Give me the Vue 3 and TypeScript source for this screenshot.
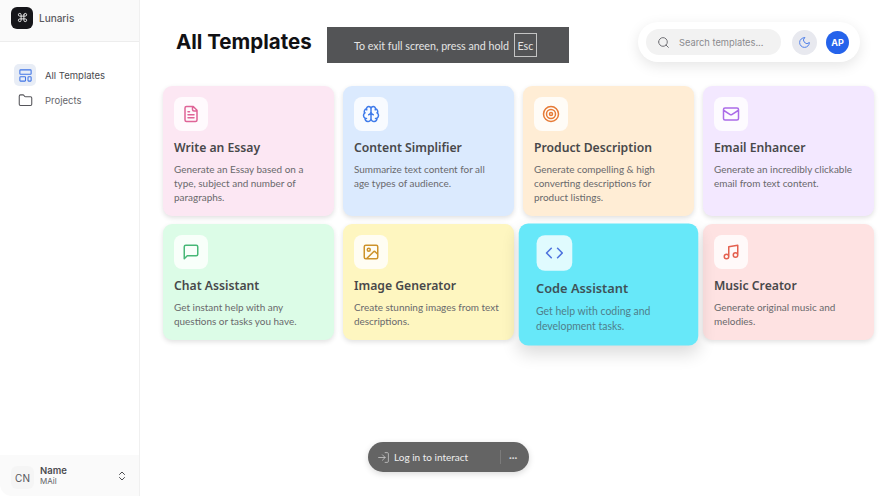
<script setup lang="ts">
const icons: Record<string, string> = {
  command: 'M15 6v12a3 3 0 1 0 3-3H6a3 3 0 1 0 3 3V6a3 3 0 1 0-3 3h12a3 3 0 1 0-3-3',
  layout: 'M4 3h16a1 1 0 0 1 1 1v5a1 1 0 0 1-1 1H4a1 1 0 0 1-1-1V4a1 1 0 0 1 1-1Z M4 14h7a1 1 0 0 1 1 1v5a1 1 0 0 1-1 1H4a1 1 0 0 1-1-1v-5a1 1 0 0 1 1-1Z M17 14h3a1 1 0 0 1 1 1v5a1 1 0 0 1-1 1h-3a1 1 0 0 1-1-1v-5a1 1 0 0 1 1-1Z',
  folder: 'M20 20a2 2 0 0 0 2-2V8a2 2 0 0 0-2-2h-7.9a2 2 0 0 1-1.69-.9L9.6 3.9A2 2 0 0 0 7.93 3H4a2 2 0 0 0-2 2v13a2 2 0 0 0 2 2Z',
  chevrons: 'm7 15 5 5 5-5 M7 9l5-5 5 5',
  search: 'M3 11a8 8 0 1 0 16 0a8 8 0 1 0-16 0 M21 21l-4.3-4.3',
  moon: 'M12 3a6 6 0 0 0 9 9 9 9 0 1 1-9-9Z',
  login: 'M15 3h4a2 2 0 0 1 2 2v14a2 2 0 0 1-2 2h-4 M10 17l5-5-5-5 M15 12H3',
  file: 'M15 2H6a2 2 0 0 0-2 2v16a2 2 0 0 0 2 2h12a2 2 0 0 0 2-2V7Z M14 2v4a2 2 0 0 0 2 2h4 M10 9H8 M16 13H8 M16 17H8',
  brain: 'M12 5a3 3 0 1 0-5.997.125 4 4 0 0 0-2.526 5.77 4 4 0 0 0 .556 6.588A4 4 0 1 0 12 18Z M12 5a3 3 0 1 1 5.997.125 4 4 0 0 1 2.526 5.77 4 4 0 0 1-.556 6.588A4 4 0 1 1 12 18Z M15 13a4.5 4.5 0 0 1-3-4 4.5 4.5 0 0 1-3 4 M17.599 6.5a3 3 0 0 0 .399-1.375 M6.003 5.125A3 3 0 0 0 6.401 6.5 M3.477 10.896a4 4 0 0 1 .585-.396 M19.938 10.5a4 4 0 0 1 .585.396 M6 18a4 4 0 0 1-1.967-.516 M19.967 17.484A4 4 0 0 1 18 18',
  target: 'M2 12a10 10 0 1 0 20 0a10 10 0 1 0-20 0 M6 12a6 6 0 1 0 12 0a6 6 0 1 0-12 0 M10 12a2 2 0 1 0 4 0a2 2 0 1 0-4 0',
  mail: 'M4 4h16a2 2 0 0 1 2 2v12a2 2 0 0 1-2 2H4a2 2 0 0 1-2-2V6a2 2 0 0 1 2-2Z M22 7l-8.97 5.7a1.94 1.94 0 0 1-2.06 0L2 7',
  chat: 'M21 15a2 2 0 0 1-2 2H7l-4 4V5a2 2 0 0 1 2-2h14a2 2 0 0 1 2 2z',
  image: 'M5 3h14a2 2 0 0 1 2 2v14a2 2 0 0 1-2 2H5a2 2 0 0 1-2-2V5a2 2 0 0 1 2-2Z M7 9a2 2 0 1 0 4 0a2 2 0 1 0-4 0 M21 15l-3.086-3.086a2 2 0 0 0-2.828 0L6 21',
  code: 'M16 18l6-6-6-6 M8 6l-6 6 6 6',
  music: 'M9 18V5l12-2v13 M3 18a3 3 0 1 0 6 0a3 3 0 1 0-6 0 M15 16a3 3 0 1 0 6 0a3 3 0 1 0-6 0',
}

interface Template {
  title: string
  desc: string
  icon: string
  tone: string
}

const templates: Template[] = [
  { title: 'Write an Essay', desc: 'Generate an Essay based on a type, subject and number of paragraphs.', icon: 'file', tone: 'pink' },
  { title: 'Content Simplifier', desc: 'Summarize text content for all age types of audience.', icon: 'brain', tone: 'blue' },
  { title: 'Product Description', desc: 'Generate compelling & high converting descriptions for product listings.', icon: 'target', tone: 'orange' },
  { title: 'Email Enhancer', desc: 'Generate an incredibly clickable email from text content.', icon: 'mail', tone: 'purple' },
  { title: 'Chat Assistant', desc: 'Get instant help with any questions or tasks you have.', icon: 'chat', tone: 'green' },
  { title: 'Image Generator', desc: 'Create stunning images from text descriptions.', icon: 'image', tone: 'yellow' },
  { title: 'Code Assistant', desc: 'Get help with coding and development tasks.', icon: 'code', tone: 'cyan' },
  { title: 'Music Creator', desc: 'Generate original music and melodies.', icon: 'music', tone: 'red' },
]
</script>

<template>
  <div class="app">
    <aside class="sidebar">
      <div class="brand">
        <span class="logo">
          <svg viewBox="0 0 24 24" class="stroke logo-icon"><path :d="icons.command" /></svg>
        </span>
        <span class="brand-name">Lunaris</span>
      </div>
      <nav class="nav">
        <a class="nav-item">
          <span class="nav-icon active">
            <svg viewBox="0 0 24 24" class="stroke nav-svg blue-stroke"><path :d="icons.layout" /></svg>
          </span>
          <span>All Templates</span>
        </a>
        <a class="nav-item">
          <span class="nav-icon">
            <svg viewBox="0 0 24 24" class="stroke nav-svg"><path :d="icons.folder" /></svg>
          </span>
          <span>Projects</span>
        </a>
      </nav>
      <div class="user">
        <span class="avatar">CN</span>
        <span class="user-text">
          <strong>Name</strong>
          <small>MAil</small>
        </span>
        <svg viewBox="0 0 24 24" class="stroke chevrons"><path :d="icons.chevrons" /></svg>
      </div>
    </aside>

    <main class="main">
      <header class="header">
        <h1>All Templates</h1>
        <div class="tools">
          <div class="search">
            <svg viewBox="0 0 24 24" class="stroke search-icon"><path :d="icons.search" /></svg>
            <span>Search templates...</span>
          </div>
          <button class="theme">
            <svg viewBox="0 0 24 24" class="stroke moon"><path :d="icons.moon" /></svg>
          </button>
          <span class="profile">AP</span>
        </div>
      </header>

      <section class="grid">
        <article v-for="t in templates" :key="t.title" class="card" :class="t.tone">
          <span class="card-icon">
            <svg viewBox="0 0 24 24" class="stroke"><path :d="icons[t.icon]" /></svg>
          </span>
          <h2>{{ t.title }}</h2>
          <p>{{ t.desc }}</p>
        </article>
      </section>
    </main>

    <div class="fs-notice">
      <span>To exit full screen, press and hold</span>
      <kbd>Esc</kbd>
    </div>

    <div class="login-pill">
      <svg viewBox="0 0 24 24" class="stroke login-icon"><path :d="icons.login" /></svg>
      <span class="login-text">Log in to interact</span>
      <span class="login-sep"></span>
      <span class="login-more">···</span>
    </div>
  </div>
</template>

<style>
html, body { margin: 0; background: #fff; }
</style>

<style scoped>
* { box-sizing: border-box; }
.app {
  position: relative;
  display: flex;
  width: 896px;
  height: 496px;
  overflow: hidden;
  background: #fff;
  font-family: Inter, "Liberation Sans", sans-serif;
}
.stroke {
  fill: none;
  stroke: currentColor;
  stroke-width: 2;
  stroke-linecap: round;
  stroke-linejoin: round;
}

.sidebar {
  display: flex;
  flex-direction: column;
  flex: 0 0 140px;
  border-right: 1px solid #f0f0f0;
}
.brand {
  display: flex;
  align-items: center;
  gap: 6px;
  height: 42px;
  padding: 0 11px 6px;
  background: #fafafa;
  border-bottom: 1px solid #ededed;
}
.logo {
  display: flex;
  align-items: center;
  justify-content: center;
  width: 22px;
  height: 22px;
  border-radius: 6px;
  background: #16161a;
  color: #f4f4f4;
}
.logo-icon { width: 11px; height: 11px; }
.brand-name { font-size: 10px; font-weight: 500; color: #5a5a5f; }

.nav {
  display: flex;
  flex-direction: column;
  padding: 22px 14px 0;
  gap: 3px;
  flex: 1;
}
.nav-item {
  display: flex;
  align-items: center;
  gap: 9px;
  font-size: 9.5px;
  color: #66666b;
}
.nav-item:first-child { color: #4a4a50; }
.nav-icon {
  display: flex;
  align-items: center;
  justify-content: center;
  width: 22px;
  height: 22px;
  border-radius: 5px;
  color: #55555a;
}
.nav-icon.active { background: #e8edf6; }
.nav-svg { width: 15px; height: 15px; stroke-width: 1.7; }
.blue-stroke { color: #3f74e6; }

.user {
  display: flex;
  align-items: center;
  height: 41px;
  padding: 0 11px 0 11px;
  background: #fafafa;
  border-bottom-left-radius: 12px;
}
.avatar {
  display: flex;
  align-items: center;
  justify-content: center;
  width: 23px;
  height: 23px;
  margin-top: 4px;
  border-radius: 6px;
  background: #f5f5f5;
  font-size: 10px;
  color: #55555a;
}
.user-text {
  display: flex;
  flex-direction: column;
  flex: 1;
  margin-left: 6px;
  line-height: 11px;
}
.user-text strong { font-size: 9.5px; font-weight: 600; color: #4c4c50; }
.user-text small { font-size: 8px; color: #626266; }
.chevrons { width: 12px; height: 12px; color: #4c4c50; }

.main {
  flex: 1;
  min-width: 0;
  padding: 22px 22px 0 23px;
}
.header {
  display: flex;
  align-items: flex-start;
  justify-content: space-between;
  padding: 0 14px 0 13px;
  margin-bottom: 24px;
}
h1 {
  margin: 7px 0 0;
  font-size: 20.5px;
  line-height: 26px;
  font-weight: 700;
  color: #111114;
}
.tools {
  display: flex;
  align-items: center;
  width: 222px;
  height: 40px;
  padding: 0 11px 0 8px;
  border-radius: 20px;
  background: #fff;
  box-shadow: 0 4px 14px rgba(0, 0, 0, 0.1);
}
.search {
  display: flex;
  align-items: center;
  gap: 9px;
  width: 136px;
  height: 26px;
  padding-left: 11px;
  border-radius: 13px;
  background: #f2f2f2;
  font-size: 9.3px;
  color: #8a8a8e;
}
.search-icon { width: 13px; height: 13px; color: #6d6d72; stroke-width: 1.8; }
.theme {
  display: flex;
  align-items: center;
  justify-content: center;
  width: 25px;
  height: 25px;
  margin-left: 11px;
  padding: 0;
  border: none;
  border-radius: 50%;
  background: #e8e9ef;
  color: #4c7de8;
}
.moon { width: 13px; height: 13px; stroke-width: 1.8; }
.profile {
  display: flex;
  align-items: center;
  justify-content: center;
  width: 23px;
  height: 23px;
  margin-left: 9px;
  border-radius: 50%;
  background: #2563eb;
  color: #fff;
  font-size: 9px;
  font-weight: 700;
}

.grid {
  display: grid;
  grid-template-columns: repeat(4, 171px);
  gap: 8px 9px;
}
.card {
  padding: 11px 11px 12px;
  border-radius: 9px;
  font-family: "Noto Sans", "Open Sans", sans-serif;
  box-shadow: 0 2px 5px rgba(0, 0, 0, 0.12);
}
.card-icon {
  display: flex;
  align-items: center;
  justify-content: center;
  width: 34px;
  height: 34px;
  border-radius: 8px;
  background: rgba(255, 255, 255, 0.8);
}
.card-icon svg { width: 18px; height: 18px; }
h2 {
  margin: 8px 0 5px;
  font-size: 12.2px;
  line-height: 18px;
  font-weight: 600;
  color: #48484a;
}
p {
  max-width: 146px;
  margin: 0;
  font-family: Lato, "Noto Sans", sans-serif;
  font-size: 9.95px;
  line-height: 14px;
  color: #69696c;
}
.pink { background: #fce7f3; }
.pink svg { color: #df6497; }
.blue { background: #dbeafe; }
.blue svg { color: #3f7bea; }
.orange { background: #ffedd5; }
.orange svg { color: #e67a36; }
.purple { background: #f3e8ff; }
.purple svg { color: #ab6be8; }
.green { background: #dcfce7; }
.green svg { color: #47b877; }
.yellow { background: #fef6c0; }
.yellow svg { color: #cd932a; }
.cyan {
  padding-left: 16.5px;
  background: #67e8f9;
  transform: translateY(2.5px) scale(1.05);
  box-shadow: 0 8px 16px rgba(0, 0, 0, 0.14);
}
.cyan svg { color: #4f74de; }
.cyan h2 { color: #3e5258; }
.cyan p { color: #4f7f8b; }
.red { background: #fee2e2; }
.red svg { color: #e4604f; }

.fs-notice {
  position: absolute;
  left: 327px;
  top: 27px;
  display: flex;
  align-items: center;
  gap: 5px;
  width: 242px;
  height: 36px;
  padding-left: 27px;
  background: #535456;
  color: #e4e4e4;
  font-family: Lato, "Noto Sans", sans-serif;
  font-size: 10.7px;
}
kbd {
  display: flex;
  align-items: center;
  justify-content: center;
  width: 23px;
  height: 24px;
  border: 1px solid #c4c4c4;
  font-family: inherit;
  font-size: 10.7px;
}

.login-pill {
  position: absolute;
  left: 368px;
  top: 442px;
  display: flex;
  align-items: center;
  width: 161px;
  height: 30px;
  padding-left: 9px;
  border-radius: 15px;
  background: #646464;
  color: #eeeeee;
  box-shadow: 0 2px 6px rgba(0, 0, 0, 0.15);
  font-family: Lato, "Noto Sans", sans-serif;
  font-size: 10px;
}
.login-icon { width: 13px; height: 13px; stroke-width: 1.4; color: #d0d0d0; }
.login-text { width: 74px; margin-left: 4px; white-space: nowrap; }
.login-sep {
  width: 1px;
  height: 14px;
  margin-left: 32px;
  background: #7b7b7b;
}
.login-more { margin-left: 8px; font-weight: 700; font-size: 10px; color: #d8d8d8; }
</style>
